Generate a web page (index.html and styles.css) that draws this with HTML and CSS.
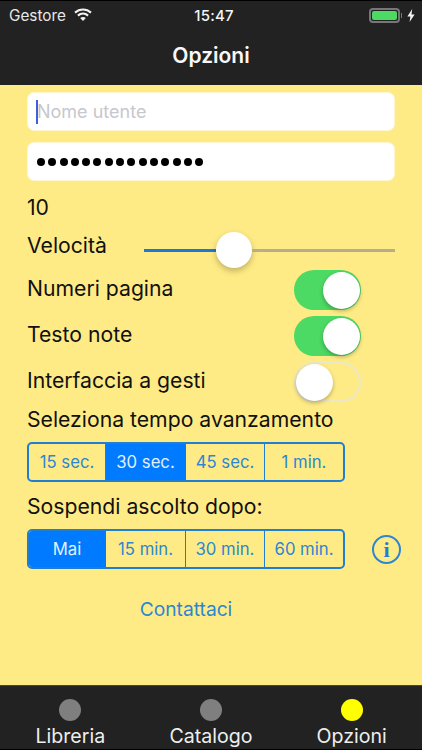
FILE: index.html
```html
<!DOCTYPE html>
<html lang="it">
<head>
<meta charset="utf-8">
<title>Opzioni</title>
<link rel="stylesheet" href="styles.css">
</head>
<body>
<div class="screen">
  <header class="topbar">
    <div class="status">
      <div class="status-left">
        <span class="carrier">Gestore</span>
        <svg class="wifi" viewBox="0 0 18 13" width="18" height="13">
          <path d="M1 4.6C5.5.5 12.5.5 17 4.6" fill="none" stroke="#f2f2f2" stroke-width="2.1"/>
          <path d="M3.9 7.6c3-2.6 7.2-2.6 10.2 0" fill="none" stroke="#f2f2f2" stroke-width="2.1"/>
          <path d="M6.2 9.9c1.7-1.3 3.9-1.3 5.6 0L9 12.9z" fill="#f2f2f2"/>
        </svg>
      </div>
      <span class="time">15:47</span>
      <div class="status-right">
        <span class="battery"><span class="battery-fill"></span></span>
        <span class="battery-cap"></span>
        <svg class="bolt" viewBox="0 0 8 13" width="8" height="13">
          <path d="M5.2 0 .4 7.4h3L2.6 13l5-7.6H4.5z" fill="#f4f4f4"/>
        </svg>
      </div>
    </div>
    <h1 class="title">Opzioni</h1>
  </header>

  <main class="content">
    <div class="field field-user"><span class="caret"></span><span class="placeholder">Nome utente</span></div>
    <div class="field field-pass">
      <span class="dot"></span><span class="dot"></span><span class="dot"></span><span class="dot"></span><span class="dot"></span>
      <span class="dot"></span><span class="dot"></span><span class="dot"></span><span class="dot"></span><span class="dot"></span>
      <span class="dot"></span><span class="dot"></span><span class="dot"></span><span class="dot"></span><span class="dot"></span>
    </div>

    <div class="value">10</div>

    <div class="slider-row">
      <span class="slider-label">Velocità</span>
      <div class="slider">
        <span class="track track-on"></span>
        <span class="thumb"></span>
        <span class="track track-off"></span>
      </div>
    </div>

    <div class="switch-row row-first">
      <span>Numeri pagina</span>
      <span class="switch on"><span class="knob"></span></span>
    </div>
    <div class="switch-row">
      <span>Testo note</span>
      <span class="switch on"><span class="knob"></span></span>
    </div>
    <div class="switch-row">
      <span>Interfaccia a gesti</span>
      <span class="switch off"><span class="knob"></span></span>
    </div>

    <div class="heading heading-first">Seleziona tempo avanzamento</div>
    <div class="segments">
      <span class="seg seg-a">15 sec.</span>
      <span class="seg seg-b selected">30 sec.</span>
      <span class="seg seg-c">45 sec.</span>
      <span class="seg seg-d">1 min.</span>
    </div>

    <div class="heading heading-second">Sospendi ascolto dopo:</div>
    <div class="seg-row">
      <div class="segments">
        <span class="seg seg-a selected">Mai</span>
        <span class="seg seg-b">15 min.</span>
        <span class="seg seg-c">30 min.</span>
        <span class="seg seg-d">60 min.</span>
      </div>
      <span class="info">i</span>
    </div>

    <div class="contact">Contattaci</div>
  </main>

  <nav class="tabbar">
    <div class="tab"><span class="tab-dot"></span><span class="tab-label">Libreria</span></div>
    <div class="tab"><span class="tab-dot"></span><span class="tab-label">Catalogo</span></div>
    <div class="tab"><span class="tab-dot active"></span><span class="tab-label">Opzioni</span></div>
  </nav>
</div>
</body>
</html>
```
FILE: styles.css
```css
* { box-sizing: border-box; }
html, body { margin: 0; padding: 0; }
body { font-family: Inter, Roboto, "Liberation Sans", sans-serif; background: #ffeb85; }

.screen { width: 422px; height: 750px; display: flex; flex-direction: column; overflow: hidden; background: #ffeb85; color: #111; }

/* top bar */
.topbar { height: 85px; flex: none; background: #222; color: #f5f5f5; border-top: 1px solid #000; }
.status { height: 28px; display: grid; grid-template-columns: 1fr auto 1fr; align-items: center; padding: 0 7px 0 9px; }
.status-left { display: flex; align-items: center; gap: 8px; }
.carrier { font-size: 15.3px; color: #e8e8e8; }
.wifi { display: block; margin-top: -2px; }
.time { font-size: 15px; font-weight: 500; margin-left: 4px; letter-spacing: .2px; }
.status-right { display: flex; align-items: center; justify-content: flex-end; }
.battery { width: 31px; height: 15px; border: 2px solid #777; border-radius: 4px; padding: 1px; display: flex; }
.battery-fill { flex: 1; background: #4cd964; border-radius: 2px; }
.battery-cap { width: 1.5px; height: 5px; background: #777; margin-left: 1px; }
.bolt { margin-left: 5px; display: block; }
.title { margin: 10px 0 0; height: 34px; line-height: 34px; text-align: center; font-size: 21px; font-weight: 600; color: #f8f8f8; }

/* content */
.content { flex: 1; padding: 7px 0 0 27px; font-size: 21.2px; }
.field { width: 368px; height: 39px; background: #fff; border-radius: 7px; border: 1px solid #fdf6cf; display: flex; align-items: center; }
.field-user { padding-left: 8px; }
.field-pass { margin-top: 11px; padding-left: 9px; gap: 3.3px; }
.caret { width: 2px; height: 24px; background: #3f5fe0; flex: none; }
.placeholder { font-size: 18px; color: #c7c7cd; margin-left: -1px; }
.dot { width: 8px; height: 8px; border-radius: 50%; background: #000; flex: none; }

.value { margin-top: 11px; height: 28px; line-height: 30px; }

.slider-row { margin-top: 12px; height: 36px; width: 368px; display: flex; align-items: flex-start; }
.slider-label { width: 117px; line-height: 27px; flex: none; }
.slider { flex: 1; height: 36px; display: flex; align-items: center; }
.track { height: 3px; display: block; }
.track-on { width: 72px; background: #1a7ad6; }
.track-off { flex: 1; background: #b5ad8c; }
.thumb { width: 36px; height: 36px; border-radius: 50%; background: #fff; flex: none; box-shadow: 0 3px 6px rgba(0,0,0,.25); }

.switch-row { height: 40px; width: 334px; margin-top: 6px; display: flex; justify-content: space-between; align-items: center; line-height: 37px; }
.row-first { margin-top: 2px; }
.switch-row > span:first-child { align-self: flex-start; }
.switch { width: 67px; height: 40px; border-radius: 20px; display: flex; align-items: center; padding: 0 1.5px; flex: none; }
.switch.on { background: #4cd964; justify-content: flex-end; }
.switch.off { border: 2px solid #ece7c8; background: #ffeb85; padding: 0; }
.knob { width: 37px; height: 37px; border-radius: 50%; background: #fff; box-shadow: 0 2px 4px rgba(0,0,0,.28); display: block; }

.heading { height: 28px; line-height: 30px; }
.heading-first { margin-top: 2px; }
.heading-second { margin-top: 9px; }

.segments { margin-top: 10px; width: 318px; height: 40px; display: flex; border: 2px solid #1f7fd0; border-radius: 5px; overflow: hidden; font-size: 16.7px; color: #2b86d4; }
.seg { display: flex; align-items: center; justify-content: center; border-right: 1.5px solid #1f7fd0; }
.seg-a { width: 77px; }
.seg-b { width: 80px; }
.seg-c { width: 79px; }
.seg-d { flex: 1; border-right: 0; }
.seg.selected { background: #007aff; color: #e4f0fb; border-right-color: #007aff; }

.seg-row { display: flex; align-items: flex-end; }
.info { width: 29px; height: 29px; margin: 0 0 5px 27px; border: 2px solid #2b86d4; border-radius: 50%; color: #1f7fd0; font-family: "Liberation Serif", serif; font-weight: 700; font-size: 22px; line-height: 1; display: flex; align-items: center; justify-content: center; flex: none; }

.contact { margin-top: 26px; width: 318px; height: 28px; line-height: 28px; text-align: center; font-size: 19.2px; color: #2b86d4; }

/* tab bar */
.tabbar { height: 65px; flex: none; display: flex; background: #222; border-top: 1px solid #4a4630; border-bottom: 1px solid #000; }
.tab { flex: 1; display: flex; flex-direction: column; align-items: center; padding-top: 13px; }
.tab-dot { width: 22px; height: 22px; border-radius: 50%; background: #7f7f7f; display: block; flex: none; }
.tab-dot.active { background: #ffff00; }
.tab-label { margin-top: 3px; font-size: 19.6px; line-height: 25px; color: #eee; }
```
